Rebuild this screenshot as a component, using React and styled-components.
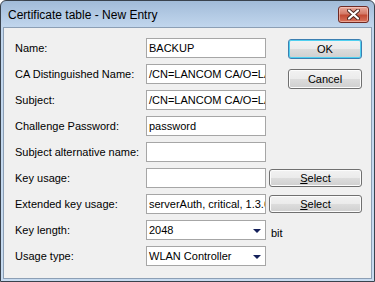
import React from 'react';
import styled, { createGlobalStyle } from 'styled-components';

const GlobalStyle = createGlobalStyle`
  html, body {
    margin: 0;
    padding: 0;
    background: #ffffff;
  }
`;

const Window = styled.div`
  width: 375px;
  height: 282px;
  box-sizing: border-box;
  border: 1px solid #39424d;
  border-radius: 6px 6px 0 0;
  background: linear-gradient(180deg, #a1bbd8 0px, #b3cae4 14px, #c1d6ed 26px, #c7dbf0 100%);
  display: flex;
  flex-direction: column;
  padding: 0 2px 2px 2px;
  font-family: "Liberation Sans", Arial, sans-serif;
  overflow: hidden;
`;

const TitleBar = styled.div`
  height: 26px;
  display: flex;
  align-items: center;
  justify-content: space-between;
  padding: 0 3px 0 5px;
  flex-shrink: 0;
`;

const Title = styled.span`
  font-size: 12px;
  color: #000000;
  margin-top: 1px;
`;

const CloseButton = styled.div`
  width: 31px;
  height: 17px;
  box-sizing: border-box;
  border: 1px solid #6e2a25;
  border-radius: 3px;
  background: linear-gradient(180deg, #e9a99c 0%, #d47a68 45%, #c24a34 55%, #d8735c 100%);
  box-shadow: inset 0 0 0 1px rgba(255, 220, 210, 0.5);
  display: flex;
  align-items: center;
  justify-content: center;
  margin-top: 1px;
`;

const Client = styled.div`
  flex: 1;
  box-sizing: border-box;
  background: #f0f0f0;
  border: 1px solid #8c9fb5;
  padding: 10px 0 0 11px;
`;

const Form = styled.div`
  display: grid;
  grid-template-columns: 131px 120px 3px 19px 73px;
  grid-auto-rows: 20px;
  row-gap: 6px;
`;

const Label = styled.div`
  grid-column: 1;
  font-size: 11px;
  color: #000000;
  display: flex;
  align-items: center;
  padding-bottom: 1px;
`;

const TextBox = styled.div`
  grid-column: 2;
  box-sizing: border-box;
  background: #ffffff;
  border: 1px solid #a6a6a6;
  font-size: 11px;
  color: #000000;
  padding: 0 2px;
  display: flex;
  align-items: center;
  white-space: nowrap;
  overflow: hidden;
`;

const Combo = styled(TextBox)`
  justify-content: space-between;
  padding-right: 4px;
`;

const Arrow = styled.span`
  width: 0;
  height: 0;
  border-left: 4px solid transparent;
  border-right: 4px solid transparent;
  border-top: 4px solid #14205a;
  margin-top: 1px;
`;

const Button = styled.div`
  box-sizing: border-box;
  border: 1px solid ${p => (p.$default ? '#3c7fb1' : '#707070')};
  border-radius: 3px;
  background: linear-gradient(180deg, #f2f2f2 0%, #ebebeb 49%, #dddddd 50%, #cfcfcf 100%);
  box-shadow: ${p => (p.$default ? 'inset 0 0 0 1px #4fd0f0' : 'inset 0 0 0 1px #fcfcfc')};
  font-size: 11px;
  color: #000000;
  display: flex;
  align-items: center;
  justify-content: center;
  height: ${p => p.$h || 20}px;
`;

const SelectButton = styled(Button)`
  grid-column: 4 / span 2;
  align-self: center;
  margin-right: -1px;
`;

const AccessText = styled.span`
  &::first-letter {
    text-decoration: underline;
  }
`;

const ButtonStack = styled.div`
  grid-column: 5;
  grid-row: 1 / span 3;
  display: flex;
  flex-direction: column;
  gap: 10px;
  padding-top: 1px;
  margin-right: -1px;
`;

const Unit = styled.div`
  grid-column: 4 / span 2;
  font-size: 11px;
  display: flex;
  align-items: center;
  padding: 6px 0 0 2px;
`;

const fields = [
  { label: 'Name:', value: 'BACKUP' },
  { label: 'CA Distinguished Name:', value: '/CN=LANCOM CA/O=LANCOM' },
  { label: 'Subject:', value: '/CN=LANCOM CA/O=LANCOM' },
  { label: 'Challenge Password:', value: 'password' },
  { label: 'Subject alternative name:', value: '' },
];

export default function App() {
  return (
    <>
      <GlobalStyle />
      <Window>
        <TitleBar>
          <Title>Certificate table - New Entry</Title>
          <CloseButton>
            <svg width="13" height="11" viewBox="0 0 13 11">
              <path
                d="M2 1.5 L11 9.5 M11 1.5 L2 9.5"
                stroke="#4a2520"
                strokeWidth="4"
                strokeLinecap="round"
              />
              <path
                d="M2 1.5 L11 9.5 M11 1.5 L2 9.5"
                stroke="#ffffff"
                strokeWidth="2.2"
                strokeLinecap="round"
              />
            </svg>
          </CloseButton>
        </TitleBar>
        <Client>
          <Form>
            {fields.map((f, i) => (
              <React.Fragment key={f.label}>
                <Label style={{ gridRow: i + 1 }}>{f.label}</Label>
                <TextBox style={{ gridRow: i + 1 }}>{f.value}</TextBox>
              </React.Fragment>
            ))}
            <ButtonStack>
              <Button $default>OK</Button>
              <Button>Cancel</Button>
            </ButtonStack>

            <Label>Key usage:</Label>
            <TextBox />
            <SelectButton $h={18}>
              <AccessText>Select</AccessText>
            </SelectButton>

            <Label>Extended key usage:</Label>
            <TextBox>serverAuth, critical, 1.3.6.1.5.5.7.3.1</TextBox>
            <SelectButton $h={18}>
              <AccessText>Select</AccessText>
            </SelectButton>

            <Label>Key length:</Label>
            <Combo>
              <span>2048</span>
              <Arrow />
            </Combo>
            <Unit>bit</Unit>

            <Label>Usage type:</Label>
            <Combo>
              <span>WLAN Controller</span>
              <Arrow />
            </Combo>
          </Form>
        </Client>
      </Window>
    </>
  );
}
